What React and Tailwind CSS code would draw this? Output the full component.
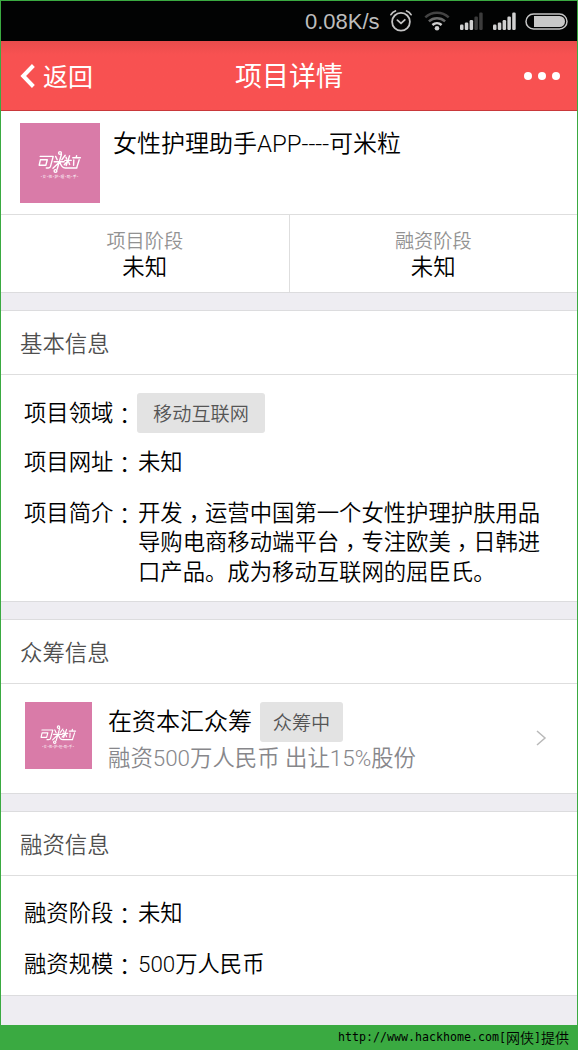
import { clsx } from 'clsx';

/* ─── Icons ──────────────────────────────────────────────────────────────── */

function AlarmIcon() {
  return (
    <svg width="22" height="22" viewBox="0 0 22 22" fill="none" stroke="#c4c4c4" strokeWidth="1.8" strokeLinecap="round">
      <circle cx="11" cy="11.8" r="8.9" />
      <path d="M7.4 10.2 11 13.4l3.8-3.6" />
      <path d="M1 4.6A8 8 0 0 1 5.4 1M16.6 1A8 8 0 0 1 21 4.6" />
    </svg>
  );
}

function WifiIcon() {
  return (
    <svg width="26" height="20" viewBox="0 0 26 20" fill="none" strokeWidth="2.5">
      <path d="M1.3 6.4a17 17 0 0 1 23.4 0" stroke="#434343" />
      <path d="M4.9 10.4a12 12 0 0 1 16.2 0" stroke="#686868" />
      <path d="M8.4 14a7 7 0 0 1 9.2 0" stroke="#d0d0d0" />
      <circle cx="13" cy="17.2" r="2.3" fill="#d0d0d0" />
    </svg>
  );
}

function SignalIcon({ level }) {
  const bars = [5.5, 7.5, 10, 13.5, 17.5];
  return (
    <svg width="23" height="18" viewBox="0 0 23 18">
      {bars.map((h, i) => (
        <rect key={h} x={i * 4.8} y={18 - h} width="3.5" height={h} rx="1.2" fill={i < level ? '#d0d0d0' : '#3c3c3c'} />
      ))}
    </svg>
  );
}

function BatteryIcon() {
  return (
    <svg width="43" height="17" viewBox="0 0 43 17">
      <rect x="1" y="1" width="41" height="15" rx="7.5" fill="none" stroke="#c4c4c4" strokeWidth="1.5" />
      <path d="M9 3h25.5a5.5 5.5 0 0 1 0 11H9z" fill="#c8c8c8" />
    </svg>
  );
}

function AppLogo({ className }) {
  return (
    <svg className={clsx('shrink-0', className)} viewBox="0 0 80 80">
      <rect width="80" height="80" fill="#d97ba8" />
      <g fill="none" stroke="#fff" strokeWidth="1.4" strokeLinecap="round" strokeLinejoin="round">
        <path d="M20.2 33.4h13l-2.7 10q-.4 1.6-2.2 1.6h-2" />
        <path d="M20.4 36.8h6.9l-1.5 5.4h-6.6z" />
        <path d="M34.2 38.7h10M41.4 31.5 37.2 46M35.6 33.4l1.6 3.3M45.2 32.3l-3.4 4.4M39 39.4 33 45.2M40 39.4q1.6 5.6 5.2 5.6h11.6" />
        <circle cx="40" cy="30" r="1.4" />
        <circle cx="35.5" cy="48" r="1.4" />
        <path d="M44.8 37.4h6.4M49.6 32.8l-3.4 9.8M46 34.2l.6 1.6M47 38.8l-2.7 3M48.6 38.8l1 2.7M52.8 34.7h7.6M56.6 32.6l-.4 2M53.8 37l-.2 5.2M59.2 36.8l-2.4 7.6" />
      </g>
      <text x="19.5" y="54.6" fontSize="3.8" fill="#fff" textLength="40" className="font-['Noto_Sans_CJK_SC',sans-serif] font-normal">
        ·女·性·护·理·助·手·
      </text>
    </svg>
  );
}

/* ─── Building blocks ────────────────────────────────────────────────────── */

// Full-width punctuation centred in its cell; leading-none keeps the line height intact
function Comma() {
  return <span className="align-[-6px] font-['Noto_Sans_CJK_TC',sans-serif] leading-none">，</span>;
}

function Colon() {
  return <span className="align-[-3px] font-['Noto_Sans_CJK_TC',sans-serif] leading-none">：</span>;
}

function Tag({ className, children }) {
  return (
    <span className={clsx('flex h-10 items-center justify-center rounded-[3px] bg-[#e3e3e3] pt-[3px] text-[19.2px] leading-none text-[#555]', className)}>
      {children}
    </span>
  );
}

function Section({ title, className, children }) {
  return (
    <section className={clsx('mt-[17px] border-y border-[#dcdcde] bg-white', className)}>
      <h2 className="flex h-16 items-center border-b border-[#dedede] pl-[19px] pt-[3px] text-[22.4px] leading-none text-[#4f4f4f]">
        {title}
      </h2>
      {children}
    </section>
  );
}

function Row({ label, className, children }) {
  return (
    <div className={clsx('flex text-[22.35px] leading-[29px]', className)}>
      <span className="h-[29px] w-[114px] shrink-0">{label}<Colon /></span>
      {children}
    </div>
  );
}

function Stage({ label, value, className }) {
  return (
    <div className={clsx('flex flex-1 flex-col items-center pt-[14px]', className)}>
      <span className="text-[19.2px] leading-[26px] text-[#929292]">{label}</span>
      <span className="text-[22.4px] leading-[24px]">{value}</span>
    </div>
  );
}

export default function App() {
  return (
    <div className="flex h-[1050px] w-[578px] flex-col overflow-hidden bg-[#3aaa41] font-['Roboto','Noto_Sans_CJK_SC',sans-serif] font-[350] text-black">
      <div className="mx-px mt-px flex h-[1024px] flex-col bg-[#eeedf2]">
        {/* Status bar */}
        <div className="flex h-10 shrink-0 items-center bg-[#020303] pl-[304px] text-[#bdbdbd]">
          <span className="w-[85px] pt-[2px] font-['Liberation_Sans',sans-serif] text-[22px] font-normal leading-none">0.08K/s</span>
          <AlarmIcon />
          <span className="ml-[12px]"><WifiIcon /></span>
          <span className="ml-[10px]"><SignalIcon level={3} /></span>
          <span className="ml-[10px]"><SignalIcon level={5} /></span>
          <span className="ml-[9px]"><BatteryIcon /></span>
        </div>

        {/* Nav bar */}
        <header className="flex h-[70px] shrink-0 items-center border-b border-[#c9383a] bg-[#f85151] bg-linear-to-b from-[#e94c4c] to-[#f85151] to-20% font-normal text-white">
          <button className="flex flex-1 items-center pl-[19px] text-[25px] leading-none">
            <svg width="15" height="24" viewBox="0 0 15 24" fill="none" stroke="#fff" strokeWidth="4">
              <path d="M13.4 1.5 3.2 12l10.2 10.5" />
            </svg>
            <span className="ml-[8px] pt-[3px]">返回</span>
          </button>
          <h1 className="pr-[2px] pt-[3px] text-[27px] leading-none">项目详情</h1>
          <div className="flex flex-1 justify-end gap-[6px] pr-[17px]">
            <i className="size-2 rounded-full bg-white" />
            <i className="size-2 rounded-full bg-white" />
            <i className="size-2 rounded-full bg-white" />
          </div>
        </header>

        {/* Project summary */}
        <div className="shrink-0 border-b border-[#dcdcde] bg-white">
          <div className="flex h-[104px] border-b border-[#dedede] pl-[19px] pt-3">
            <AppLogo className="size-20" />
            <span className="ml-[13px] mt-[4px] text-[24px] leading-[34px]">女性护理助手APP----可米粒</span>
          </div>
          <div className="flex h-[77px]">
            <Stage label="项目阶段" value="未知" className="border-r border-[#dedede]" />
            <Stage label="融资阶段" value="未知" />
          </div>
        </div>

        <Section title="基本信息" className="h-[292px]">
          <div className="pl-[23px] pt-[18px]">
            <Row label="项目领域" className="h-10 items-center">
              <Tag className="-ml-px w-32">移动互联网</Tag>
            </Row>
            <Row label="项目网址" className="mt-[15px]">未知</Row>
            <Row label="项目简介" className="mt-[22px]">
              <p className="whitespace-nowrap">
                开发<Comma />运营中国第一个女性护理护肤用品<br />
                导购电商移动端平台<Comma />专注欧美<Comma />日韩进<br />
                口产品。成为移动互联网的屈臣氏。
              </p>
            </Row>
          </div>
        </Section>

        <Section title="众筹信息" className="h-[175px]">
          <div className="flex pl-6 pt-[18px]">
            <AppLogo className="size-[67px]" />
            <div className="ml-4 flex-1">
              <div className="flex h-10 items-center text-[24px] leading-none">
                在资本汇众筹
                <Tag className="ml-2 w-[83px]">众筹中</Tag>
              </div>
              <p className="text-[22.4px] leading-[33px] text-[#87878b]">融资500万人民币 出让15%股份</p>
            </div>
            <svg className="mr-[30px] mt-[27px]" width="12" height="18" viewBox="0 0 12 18" fill="none" stroke="#b9b9b9" strokeWidth="1.5">
              <path d="m2 2 8 7-8 7" />
            </svg>
          </div>
        </Section>

        <Section title="融资信息" className="h-[185px]">
          <div className="pl-[23px] pt-[23px]">
            <Row label="融资阶段">未知</Row>
            <Row label="融资规模" className="mt-[22px]">500万人民币</Row>
          </div>
        </Section>
      </div>

      <footer className="flex h-[25px] items-center justify-end pr-[9px] font-['DejaVu_Sans_Mono','Noto_Sans_CJK_SC',monospace] text-[11.63px] leading-none">
        http://www.hackhome.com[<span className="text-[14px]">网侠</span>]<span className="text-[14px]">提供</span>
      </footer>
    </div>
  );
}
